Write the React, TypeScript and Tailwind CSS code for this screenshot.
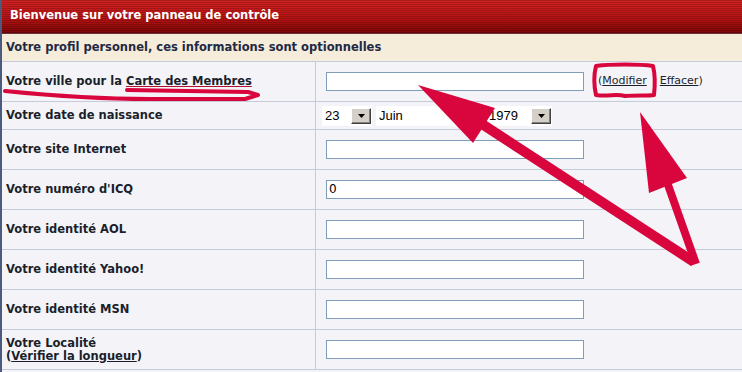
import type React from "react"

interface Field {
  label: React.ReactNode
  value?: string
}

const font = "font-['Verdana','DejaVu_Sans',sans-serif]"

const TextBox: React.FC<{ value?: string }> = ({ value }) => (
  <div className="w-[258px] h-[19px] bg-white border border-[#7f9db9] px-[2px] text-[12px] leading-[17px] text-black">
    {value}
  </div>
)

const DropButton: React.FC = () => (
  <div className="w-[20px] h-[16px] bg-[#d4d0c8] border border-t-white border-l-white border-r-[#404040] border-b-[#404040] flex items-center justify-center shadow-[inset_-1px_-1px_0_#808080]">
    <svg width="7" height="4" viewBox="0 0 7 4">
      <path d="M0 0H7L3.5 4Z" fill="#000" />
    </svg>
  </div>
)

const FakeSelect: React.FC<{ text: string; width: string }> = ({ text, width }) => (
  <div className={`${width} h-[20px] bg-white flex items-center justify-between pr-[1px]`}>
    <span className="pl-[3px] text-[13px] font-['Liberation_Sans',sans-serif] text-black">{text}</span>
    <DropButton />
  </div>
)

const Row: React.FC<{ label: React.ReactNode; h: string; children?: React.ReactNode }> = ({ label, h, children }) => (
  <div className={`flex ${h} border-b border-[#c6cbd9]`}>
    <div className="w-[314px] shrink-0 border-r border-[#c6cbd9] pl-[4px] flex items-center text-[11.5px] font-bold leading-[13px] text-[#1b1f2b]">
      <div>{label}</div>
    </div>
    <div className="flex-1 pl-[10px] flex items-center">{children}</div>
  </div>
)

const App: React.FC = () => {
  const fields: Field[] = [
    { label: "Votre site Internet" },
    { label: "Votre numéro d'ICQ", value: "0" },
    { label: "Votre identité AOL" },
    { label: "Votre identité Yahoo!" },
    { label: "Votre identité MSN" },
    {
      label: (
        <>
          Votre Localité
          <br />(<span className="underline">Vérifier la longueur</span>)
        </>
      ),
    },
  ]

  return (
    <div className={`relative w-[742px] h-[372px] overflow-hidden bg-[#f4f4f8] border-l-2 border-[#4d5a80] ${font}`}>
      {/* Title bar */}
      <div className="h-[34px] pl-[8px] flex items-center border-b border-[#6a3040] bg-[repeating-linear-gradient(to_bottom,rgba(0,0,0,0.18)_0px,rgba(0,0,0,0.18)_1px,transparent_1px,transparent_2px),linear-gradient(to_bottom,#d42222,#b31212_60%,#7c0606)]">
        <span className="text-white text-[11.5px] font-bold pb-[1px]">Bienvenue sur votre panneau de contrôle</span>
      </div>

      {/* Section header */}
      <div className="h-[28px] pl-[4px] flex items-center bg-[#f6ecda] border-b border-[#c6cbd9] text-[11.5px] font-bold text-[#1e2a44]">
        Votre profil personnel, ces informations sont optionnelles
      </div>

      <Row
        h="h-[40px]"
        label={
          <>
            Votre ville pour la <span className="underline decoration-[#b0102e]">Carte des Membres</span>
          </>
        }
      >
        <TextBox />
        <div className="ml-[14px] text-[11px] text-[#1b1f2b] flex">
          <span>
            (<span className="underline">Modifier</span>
          </span>
          <span className="ml-[13px]">
            <span className="underline">Effacer</span>)
          </span>
        </div>
      </Row>

      <Row h="h-[28px]" label="Votre date de naissance">
        <div className="flex items-center -ml-[4px] gap-[4px]">
          <FakeSelect text="23" width="w-[50px]" />
          <FakeSelect text="Juin" width="w-[106px]" />
          <FakeSelect text="1979" width="w-[66px]" />
        </div>
      </Row>

      {fields.map((f, i) => (
        <Row key={i} h="h-[40px]" label={f.label}>
          <TextBox value={f.value} />
        </Row>
      ))}

      {/* Red annotations drawn over the screenshot */}
      <svg className="absolute left-[-2px] top-0 pointer-events-none" width="742" height="372" viewBox="0 0 742 372">
        <g fill="none" stroke="#d8063c" strokeLinecap="round" strokeLinejoin="round">
          <path d="M5 91 C45 95 90 99 150 99 L245 99 L258 95 L248 92 L127 90" strokeWidth="4" />
          <path d="M596 66 C 594 74 594 86 596 95 C 610 97 615 93 625 96 C 637 95 648 96 654 95 C 655 86 655 74 653 66 C 640 64 610 64 596 66 Z" strokeWidth="4" />
        </g>
        <g fill="#d8063c">
          <path d="M418 85 L495 108 L473 143 Z" />
          <path d="M640 112 L687 178 L649 193 Z" />
        </g>
        <g stroke="#d8063c" strokeLinecap="butt">
          <line x1="482" y1="124" x2="694" y2="262" strokeWidth="10" />
          <line x1="667" y1="182" x2="696" y2="264" strokeWidth="8" />
        </g>
      </svg>
    </div>
  )
}

export default App
